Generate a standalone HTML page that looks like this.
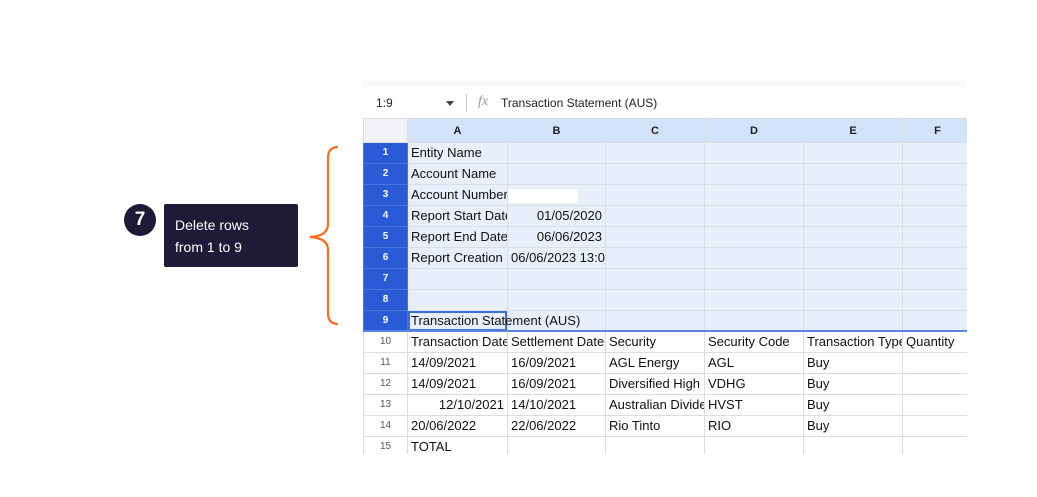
<!DOCTYPE html>
<html><head><style>
body{margin:0;width:1037px;height:497px;background:#fff;position:relative;overflow:hidden;font-family:"Liberation Sans",Arial,sans-serif}
.sheet{position:absolute;left:363px;top:80px;width:604px;height:374px;overflow:hidden}
.topband{position:absolute;left:0;top:0;width:604px;height:7px;background:#f8f9fb}
table{position:absolute;left:0;top:38px;width:609px;border-collapse:collapse;table-layout:fixed;font-size:13px;color:#111}
td{border:1px solid #dadde3;height:20px;padding:0 0 0 3px;white-space:nowrap;overflow:hidden;line-height:20px}
td.rh{text-align:center;font-size:10px;color:#555;padding:0;background:#fff}
tr.sel td{background:#e8eefa}
tr.sel td.rh{background:#2a5bd7;color:#fff;font-weight:bold;border-color:#4a73dd}
tr.hd td{background:#d3e2fb;text-align:center;font-weight:bold;font-size:11px;height:23px;color:#222;padding:0}
tr.hd td.rh{background:#f1f3f6}
.r{text-align:right;padding-right:3px}
</style></head><body>
<div style="position:absolute;left:124px;top:204px;width:32px;height:32px;border-radius:50%;background:#1d1b38;color:#fff;font-weight:bold;font-size:19px;text-align:center;line-height:32px">7</div>
<div style="position:absolute;left:164px;top:204px;width:134px;height:63px;background:#1d1b38;border-radius:2px;color:#fff;font-size:14px;line-height:22px;box-sizing:border-box;padding:10px 0 0 11px">Delete rows<br>from 1 to 9</div>
<svg style="position:absolute;left:300px;top:140px" width="45" height="190"><path d="M38 7 Q28 7 28 18 L28 84 Q28 96 10 97 Q28 98 28 110 L28 173 Q28 184 38 184" fill="none" stroke="#ff6b1a" stroke-width="2.2"/></svg>
<div class="sheet">
<div class="topband"></div>
<div style="position:absolute;left:13px;top:16px;font-size:12px;color:#222">1:9</div>
<div style="position:absolute;left:83px;top:21px;width:0;height:0;border-left:4px solid transparent;border-right:4px solid transparent;border-top:5px solid #444"></div>
<div style="position:absolute;left:103px;top:14px;width:1px;height:18px;background:#ccc"></div>
<div style="position:absolute;left:115px;top:14px;font-size:14px;color:#999;font-style:italic;font-family:'Liberation Serif',serif">fx</div>
<div style="position:absolute;left:138px;top:16px;font-size:12px;color:#222">Transaction Statement (AUS)</div>
<table>
<colgroup><col style="width:44px"><col style="width:100px"><col style="width:98px"><col style="width:99px"><col style="width:99px"><col style="width:99px"><col style="width:70px"></colgroup>
<tr class="hd"><td class="rh"></td><td>A</td><td>B</td><td>C</td><td>D</td><td>E</td><td>F</td></tr>
<tr class="sel"><td class="rh">1</td><td>Entity Name</td><td></td><td></td><td></td><td></td><td></td></tr>
<tr class="sel"><td class="rh">2</td><td>Account Name</td><td></td><td></td><td></td><td></td><td></td></tr>
<tr class="sel"><td class="rh">3</td><td>Account Number</td><td><span style="display:inline-block;width:70px;height:14px;background:#fff;vertical-align:middle;margin-left:-3px"></span></td><td></td><td></td><td></td><td></td></tr>
<tr class="sel"><td class="rh">4</td><td>Report Start Date</td><td class="r">01/05/2020</td><td></td><td></td><td></td><td></td></tr>
<tr class="sel"><td class="rh">5</td><td>Report End Date</td><td class="r">06/06/2023</td><td></td><td></td><td></td><td></td></tr>
<tr class="sel"><td class="rh">6</td><td>Report Creation</td><td>06/06/2023 13:0</td><td></td><td></td><td></td><td></td></tr>
<tr class="sel"><td class="rh">7</td><td></td><td></td><td></td><td></td><td></td><td></td></tr>
<tr class="sel"><td class="rh">8</td><td></td><td></td><td></td><td></td><td></td><td></td></tr>
<tr class="sel"><td class="rh">9</td><td style="box-shadow:inset 0 0 0 2px #3b6fd6"></td><td></td><td></td><td></td><td></td><td></td></tr>
<tr><td class="rh">10</td><td>Transaction Date</td><td>Settlement Date</td><td>Security</td><td>Security Code</td><td>Transaction Type</td><td>Quantity</td></tr>
<tr><td class="rh">11</td><td>14/09/2021</td><td>16/09/2021</td><td>AGL Energy</td><td>AGL</td><td>Buy</td><td></td></tr>
<tr><td class="rh">12</td><td>14/09/2021</td><td>16/09/2021</td><td>Diversified High</td><td>VDHG</td><td>Buy</td><td></td></tr>
<tr><td class="rh">13</td><td class="r">12/10/2021</td><td>14/10/2021</td><td>Australian Dividend</td><td>HVST</td><td>Buy</td><td></td></tr>
<tr><td class="rh">14</td><td>20/06/2022</td><td>22/06/2022</td><td>Rio Tinto</td><td>RIO</td><td>Buy</td><td></td></tr>
<tr><td class="rh">15</td><td>TOTAL</td><td></td><td></td><td></td><td></td><td></td></tr>
</table>
<div style="position:absolute;left:48px;top:231px;font-size:13px;color:#111;line-height:20px">Transaction Statement (AUS)</div>
<div style="position:absolute;left:0;top:250px;width:604px;height:2px;background:#5b86e0"></div>
</div>
</body></html>
